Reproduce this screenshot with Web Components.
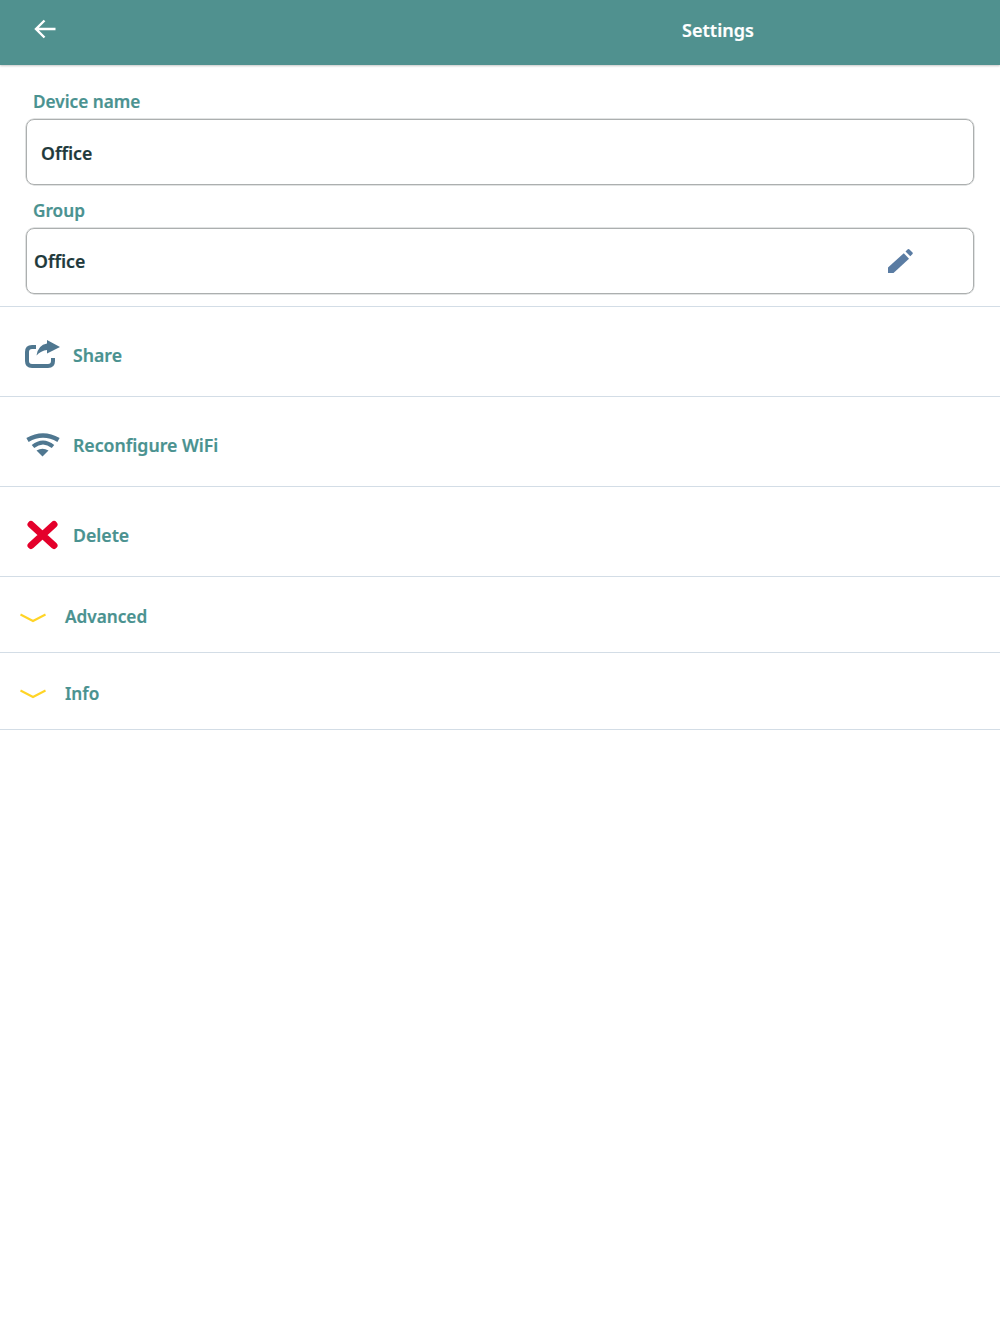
<!DOCTYPE html>
<html>
<head>
<meta charset="utf-8">
<title>Settings</title>
<style>
  html, body { margin: 0; background: #fff; }
  body { font-family: "Noto Sans", "Open Sans", sans-serif; }
</style>
</head>
<body>
<app-header>Settings</app-header>
<settings-field label="Device name" pad="14" style="--value-top: 1px">Office</settings-field>
<settings-field label="Group" pad="7" editable style="--field-top: 15px">Office</settings-field>
<div style="height:12px"></div>
<action-row label="Share" icon="share"></action-row>
<action-row label="Reconfigure WiFi" icon="wifi"></action-row>
<action-row label="Delete" icon="delete"></action-row>
<expand-row label="Advanced"></expand-row>
<expand-row label="Info"></expand-row>

<script>
class AppHeader extends HTMLElement {
  constructor() {
    super();
    this.attachShadow({ mode: 'open' });
    this.shadowRoot.innerHTML = `
      <style>
        :host {
          display: grid;
          grid-template-columns: 436px 1fr;
          align-items: center;
          height: 65px;
          background: #50918f;
          color: #fff;
          box-shadow: 0 1px 2px rgba(0, 0, 0, .22);
        }
        .back { display: flex; padding: 0 0 8px 33px; }
        .title {
          text-align: center;
          font-size: 18px;
          font-weight: 600;
          -webkit-text-stroke: .2px #fff;
          padding-bottom: 6px;
        }
      </style>
      <div class="back">
        <svg width="24" height="24" viewBox="0 0 24 24" fill="none" stroke="#fff" stroke-width="2.400">
          <path d="M22.500 12H3M11.500 3.500L3 12l8.500 8.500"/>
        </svg>
      </div>
      <div class="title"><slot></slot></div>
    `;
  }
}

class SettingsField extends HTMLElement {
  constructor() {
    super();
    this.attachShadow({ mode: 'open' });
    this.shadowRoot.innerHTML = `
      <style>
        :host {
          display: block;
          padding: var(--field-top, 26px) 26px 0;
        }
        .label {
          height: 28px;
          line-height: 22px;
          padding-left: 7px;
          font-size: 17.200px;
          font-weight: 600;
          -webkit-text-stroke: .2px #4a9290;
          color: #4a9290;
        }
        .box {
          display: flex;
          align-items: center;
          justify-content: space-between;
          box-sizing: border-box;
          height: 66px;
          border: 1px solid #acafaf;
          border-radius: 8px;
          box-shadow: 0 0 0 .5px #c4c7c7;
          font-size: 17.700px;
          font-weight: 600;
          -webkit-text-stroke: .2px #1f3a3c;
          color: #1f3a3c;
        }
        .value { padding-top: var(--value-top, 0); }
        svg { margin-right: 58px; }
      </style>
      <div class="label"></div>
      <div class="box"><span class="value"><slot></slot></span></div>
    `;
    this.shadowRoot.querySelector('.label').textContent = this.getAttribute('label');
    this.shadowRoot.querySelector('.value').style.paddingLeft = this.getAttribute('pad') + 'px';
    if (this.hasAttribute('editable')) {
      this.shadowRoot.querySelector('.box').insertAdjacentHTML('beforeend', `
        <svg width="28" height="26" viewBox="0 0 28 26" fill="#5a7ca3">
          <path d="M1 25v-5.500L16.800 5.200l5.200 5.500L6.500 25z"/>
          <path d="M18.500 3.500l2.300-2.200q.7-.6 1.400 0l3.300 3.300q.6.700 0 1.400l-2.200 2.300z"/>
        </svg>
      `);
    }
  }
}

const ICONS = {
  share: `<svg width="36" height="30" viewBox="0 0 36 30" fill="none">
    <path d="M11 7H7Q2 7 2 12V21Q2 26 7 26H23Q28 26 28 21V18" stroke="#4f7790" stroke-width="4"/>
    <path d="M22 0L35 7 22 13.500V10Q16 10.500 11.500 15.500 13 5 22 3.500z" fill="#4f7790"/>
  </svg>`,
  wifi: `<svg width="36" height="30" viewBox="0 0 36 30" fill="none" stroke="#4f7790" stroke-width="4.500">
    <path d="M2.500 10Q18 1 33.500 10"/>
    <path d="M8 16.500Q18 8.500 28 16.500" stroke-width="4"/>
    <path d="M11.500 20.500Q17.500 17 23.500 20.500L17.500 26.500z" fill="#4f7790" stroke="none"/>
  </svg>`,
  delete: `<svg width="36" height="30" viewBox="0 0 36 30" fill="none" stroke="#e4002b" stroke-width="7" stroke-linecap="round">
    <path d="M6 4.500L29 25.500M29 4.500L6 25.500"/>
  </svg>`
};

class ActionRow extends HTMLElement {
  constructor() {
    super();
    this.attachShadow({ mode: 'open' });
    this.shadowRoot.innerHTML = `
      <style>
        :host {
          display: flex;
          align-items: center;
          gap: 12px;
          box-sizing: border-box;
          height: 90px;
          padding: 6px 0 0 25px;
          border-top: 1px solid #d3dde6;
          font-size: 17.700px;
          font-weight: 600;
          -webkit-text-stroke: .2px #4a9290;
          color: #4a9290;
        }
        svg { display: block; -webkit-text-stroke: 0; }
      </style>
      ${ICONS[this.getAttribute('icon')]}
      <span></span>
    `;
    this.shadowRoot.querySelector('span').textContent = this.getAttribute('label');
  }
}

class ExpandRow extends HTMLElement {
  constructor() {
    super();
    this.attachShadow({ mode: 'open' });
    this.shadowRoot.innerHTML = `
      <style>
        :host {
          display: flex;
          align-items: center;
          gap: 19px;
          box-sizing: border-box;
          height: 76px;
          padding: 4px 0 0 20px;
          border-top: 1px solid #d3dde6;
          font-size: 17.200px;
          font-weight: 600;
          -webkit-text-stroke: .2px #4a9290;
          color: #4a9290;
        }
        :host(:last-of-type) { height: 78px; border-bottom: 1px solid #d3dde6; }
        svg { margin-top: 2px; }
      </style>
      <svg width="26" height="12" viewBox="0 0 26 12" fill="none" stroke="#ffd426" stroke-width="2">
        <path d="M0.500 2.500L13 9 25.500 2.500"/>
      </svg>
      <span></span>
    `;
    this.shadowRoot.querySelector('span').textContent = this.getAttribute('label');
  }
}

customElements.define('app-header', AppHeader);
customElements.define('settings-field', SettingsField);
customElements.define('action-row', ActionRow);
customElements.define('expand-row', ExpandRow);
</script>
</body>
</html>
